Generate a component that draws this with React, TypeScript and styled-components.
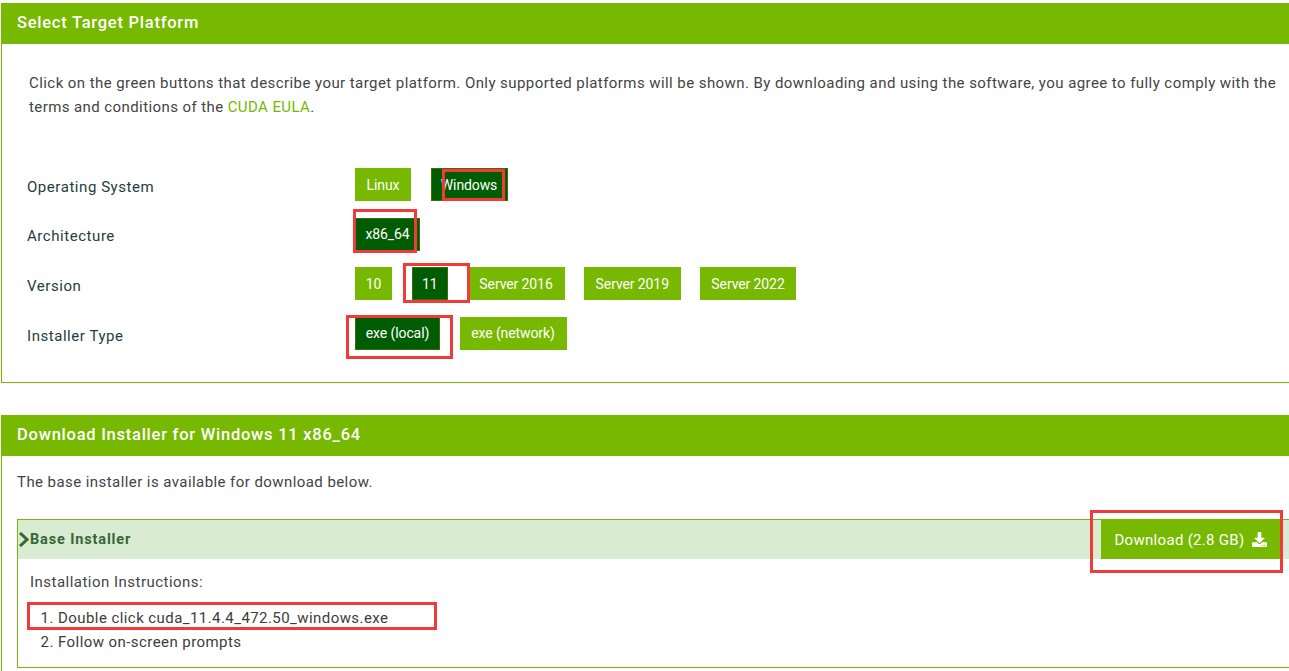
import React from 'react';
import styled, { createGlobalStyle } from 'styled-components';
import { FaDownload } from 'react-icons/fa';

const GREEN = '#76b900';
const DARK = '#005c00';

const GlobalStyle = createGlobalStyle`
  html, body {
    margin: 0;
    padding: 0;
    background: #fff;
    overflow: hidden;
  }
  body {
    font-family: Roboto, "Liberation Sans", sans-serif;
    font-size: 15px;
    color: #3c3c3c;
  }
`;

const Page = styled.div`
  position: relative;
  width: 1289px;
  height: 671px;
  overflow: hidden;
  padding: 3px 0 0 1px;
  box-sizing: border-box;
`;

const Panel = styled.section<{ $height: number; $gap?: number }>`
  width: 1320px;
  height: ${p => p.$height}px;
  margin-top: ${p => p.$gap || 0}px;
  box-sizing: border-box;
  border-left: 1px solid ${GREEN};
  border-bottom: 1px solid ${GREEN};
`;

const PanelHeader = styled.h2`
  margin: 0 0 0 -1px;
  height: 41px;
  padding-left: 16px;
  background: ${GREEN};
  color: #fff;
  font-size: 16.5px;
  font-weight: 500;
  letter-spacing: 0.75px;
  line-height: 39px;
`;

const Intro = styled.div`
  padding: 27px 0 0 27px;
  color: #444;
`;

const IntroLine = styled.div<{ $spacing: number }>`
  line-height: 24px;
  white-space: nowrap;
  letter-spacing: ${p => p.$spacing}px;
`;

const EulaLink = styled.a`
  color: ${GREEN};
  text-decoration: none;
`;

const OptionGrid = styled.div`
  display: flex;
  flex-direction: column;
  gap: 16.6px;
  margin-top: 49px;
  padding-left: 25px;
`;

const OptionRow = styled.div`
  display: grid;
  grid-template-columns: 328px auto;
  align-items: center;
  height: 33px;
`;

const OptionLabel = styled.div`
  color: #1f3d3d;
  letter-spacing: 0.55px;
  padding-top: 4.6px;
`;

const Buttons = styled.div`
  display: flex;
  gap: 19.5px;
`;

const OptionButton = styled.button<{ $width: number; $selected?: boolean }>`
  width: ${p => p.$width}px;
  height: 33px;
  padding: 0;
  box-sizing: border-box;
  border: 1px solid ${p => (p.$selected ? '#3f6b00' : GREEN)};
  background: ${p => (p.$selected ? DARK : GREEN)};
  color: #fff;
  font-family: inherit;
  font-size: 14px;
  letter-spacing: -0.1px;
`;

const BodyText = styled.p`
  margin: 0;
  padding: 17px 0 0 15px;
  line-height: 18px;
  letter-spacing: 0.43px;
  color: #444;
`;

const InstallerBox = styled.div`
  margin: 28px 0 0 15px;
  height: 149px;
  box-sizing: border-box;
  border: 1px solid ${GREEN};
  border-right: none;
`;

const InstallerBar = styled.div`
  display: flex;
  align-items: center;
  height: 39px;
  padding-right: 41px;
  background: #d9ebd0;
`;

const InstallerTitle = styled.div`
  display: flex;
  align-items: center;
  color: #38663a;
  font-weight: 700;
  font-size: 14.5px;
  letter-spacing: 0.85px;
`;

const Chevron = styled.svg`
  width: 11px;
  height: 15px;
  margin-right: 1px;
  flex: none;
`;

const DownloadButton = styled.button`
  display: flex;
  align-items: center;
  justify-content: center;
  gap: 7px;
  margin-left: auto;
  width: 179px;
  height: 39px;
  padding: 0;
  border: none;
  background: ${GREEN};
  color: #fff;
  font-family: inherit;
  font-size: 15px;
  letter-spacing: 0.3px;
`;

const Instructions = styled.div`
  padding: 14px 0 0 12px;
  letter-spacing: 0.48px;
  color: #444;
`;

const Steps = styled.ol`
  margin: 15px 0 0;
  padding-left: 40px;
  line-height: 24px;
  letter-spacing: 0.43px;
`;

const Annotation = styled.div<{ $x: number; $y: number; $w: number; $h: number }>`
  position: absolute;
  left: ${p => p.$x}px;
  top: ${p => p.$y}px;
  width: ${p => p.$w}px;
  height: ${p => p.$h}px;
  box-sizing: border-box;
  border: 3px solid #f23a3a;
  pointer-events: none;
`;

const rows = [
  { label: 'Operating System', options: [{ t: 'Linux', w: 56 }, { t: 'Windows', w: 77, on: true }] },
  { label: 'Architecture', options: [{ t: 'x86_64', w: 65, on: true }] },
  {
    label: 'Version',
    options: [
      { t: '10', w: 37 },
      { t: '11', w: 36.5, on: true },
      { t: 'Server 2016', w: 97 },
      { t: 'Server 2019', w: 96.5 },
      { t: 'Server 2022', w: 96 },
    ],
  },
  { label: 'Installer Type', options: [{ t: 'exe (local)', w: 85, on: true }, { t: 'exe (network)', w: 107 }] },
];

const marks = [
  { x: 442, y: 169, w: 63, h: 32 },
  { x: 353, y: 209, w: 64, h: 44 },
  { x: 403, y: 263, w: 67, h: 40 },
  { x: 346, y: 315, w: 107, h: 44 },
  { x: 1090, y: 510, w: 193, h: 63 },
  { x: 27, y: 602, w: 410, h: 28 },
];

export default function App() {
  return (
    <Page>
      <GlobalStyle />
      <Panel $height={380}>
        <PanelHeader>Select Target Platform</PanelHeader>
        <Intro>
          <IntroLine $spacing={0.43}>
            Click on the green buttons that describe your target platform. Only supported platforms will be shown. By
            downloading and using the software, you agree to fully comply with the
          </IntroLine>
          <IntroLine $spacing={0.41}>
            terms and conditions of the <EulaLink href="#">CUDA EULA</EulaLink>.
          </IntroLine>
        </Intro>
        <OptionGrid>
          {rows.map(row => (
            <OptionRow key={row.label}>
              <OptionLabel>{row.label}</OptionLabel>
              <Buttons>
                {row.options.map(o => (
                  <OptionButton key={o.t} $width={o.w} $selected={o.on}>
                    {o.t}
                  </OptionButton>
                ))}
              </Buttons>
            </OptionRow>
          ))}
        </OptionGrid>
      </Panel>
      <Panel $height={300} $gap={32}>
        <PanelHeader>Download Installer for Windows 11 x86_64</PanelHeader>
        <BodyText>The base installer is available for download below.</BodyText>
        <InstallerBox>
          <InstallerBar>
            <InstallerTitle>
              <Chevron viewBox="0 0 11 15">
                <path d="M2 1 L9 7.5 L2 14" fill="none" stroke="#38663a" strokeWidth="3" />
              </Chevron>
              Base Installer
            </InstallerTitle>
            <DownloadButton>
              Download (2.8 GB) <FaDownload size={15} />
            </DownloadButton>
          </InstallerBar>
          <Instructions>Installation Instructions:</Instructions>
          <Steps>
            <li>Double click cuda_11.4.4_472.50_windows.exe</li>
            <li>Follow on-screen prompts</li>
          </Steps>
        </InstallerBox>
      </Panel>
      {marks.map(m => (
        <Annotation key={`${m.x}-${m.y}`} $x={m.x} $y={m.y} $w={m.w} $h={m.h} />
      ))}
    </Page>
  );
}
